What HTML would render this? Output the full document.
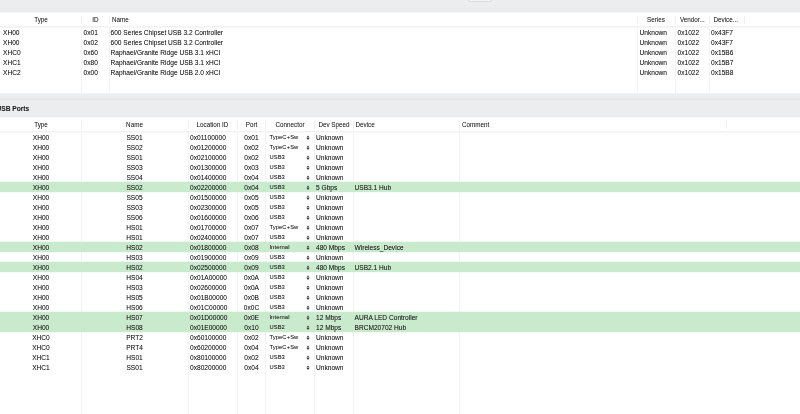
<!DOCTYPE html>
<html><head><meta charset="utf-8"><title>USB Ports</title>
<style>
html,body{margin:0;padding:0;}
body{width:800px;height:414px;overflow:hidden;background:#ecedef;font-family:"Liberation Sans",sans-serif;font-size:6.6px;color:#202020;text-shadow:0 0 0.45px rgba(0,0,0,0.3);position:relative;}
.w{position:absolute;left:0;width:800px;background:#fff;}
.t{position:absolute;white-space:nowrap;height:10px;line-height:10px;}
.h{position:absolute;white-space:nowrap;height:10px;line-height:10px;font-size:6.3px;color:#303030;}
.c{text-align:center;}
.v{position:absolute;width:1px;background:#f3f3f5;}
.hv{position:absolute;width:1px;background:#eeeef1;}
.hl{position:absolute;left:0;width:800px;height:1px;background:#f2f2f4;}
.g{position:absolute;left:0;width:800px;height:10px;background:#c9eacc;box-shadow:0 -1px 0 rgba(201,234,204,0.3),0 1px 0 rgba(201,234,204,0.2);}
.cn{font-size:5.8px;letter-spacing:0.1px;color:#222;}
.ar{position:absolute;width:4px;height:7px;}
#r{position:absolute;left:0;top:0;width:800px;height:414px;will-change:transform;}
</style></head><body><div id="r">

<div style="position:absolute;left:468px;top:-6.8px;width:22px;height:6.6px;border:1px solid #d9d9dc;border-radius:2.5px;background:#f4f4f5"></div>
<div class="w" style="top:12px;height:82px"></div>
<div style="position:absolute;left:0;top:12px;width:800px;height:1px;background:#f5f6f7"></div>
<div style="position:absolute;left:0;top:93px;width:800px;height:1px;background:#f1f2f3"></div>
<div class="hl" style="top:26px"></div><div class="hl" style="top:27px;background:#f8f8f9"></div>
<div class="hv" style="left:81px;top:16px;height:8px"></div>
<div class="hv" style="left:109px;top:16px;height:8px"></div>
<div class="hv" style="left:637px;top:16px;height:8px"></div>
<div class="hv" style="left:675px;top:16px;height:8px"></div>
<div class="hv" style="left:709px;top:16px;height:8px"></div>
<div class="hv" style="left:744px;top:16px;height:8px"></div>
<div class="v" style="left:81px;top:27px;height:67px"></div>
<div class="v" style="left:109px;top:27px;height:67px"></div>
<div class="v" style="left:637px;top:27px;height:67px"></div>
<div class="v" style="left:675px;top:27px;height:67px"></div>
<div class="v" style="left:709px;top:27px;height:67px"></div>
<div class="h c" style="left:0;width:82px;top:15.4px">Type</div>
<div class="h c" style="left:82px;width:27px;top:15.4px">ID</div>
<div class="h" style="left:112px;top:15.4px">Name</div>
<div class="h c" style="left:637.5px;width:37px;top:15.4px">Series</div>
<div class="h" style="left:680px;top:15.4px">Vendor...</div>
<div class="h" style="left:713.5px;top:15.4px">Device...</div>
<div class="t" style="left:3px;top:27.5px">XH00</div>
<div class="t" style="left:83.5px;top:27.5px">0x01</div>
<div class="t" style="left:110.5px;top:27.5px">600 Series Chipset USB 3.2 Controller</div>
<div class="t" style="left:639.5px;top:27.5px">Unknown</div>
<div class="t" style="left:677.5px;top:27.5px">0x1022</div>
<div class="t" style="left:711px;top:27.5px">0x43F7</div>
<div class="t" style="left:3px;top:37.5px">XH00</div>
<div class="t" style="left:83.5px;top:37.5px">0x02</div>
<div class="t" style="left:110.5px;top:37.5px">600 Series Chipset USB 3.2 Controller</div>
<div class="t" style="left:639.5px;top:37.5px">Unknown</div>
<div class="t" style="left:677.5px;top:37.5px">0x1022</div>
<div class="t" style="left:711px;top:37.5px">0x43F7</div>
<div class="t" style="left:3px;top:47.5px">XHC0</div>
<div class="t" style="left:83.5px;top:47.5px">0x60</div>
<div class="t" style="left:110.5px;top:47.5px">Raphael/Granite Ridge USB 3.1 xHCI</div>
<div class="t" style="left:639.5px;top:47.5px">Unknown</div>
<div class="t" style="left:677.5px;top:47.5px">0x1022</div>
<div class="t" style="left:711px;top:47.5px">0x15B6</div>
<div class="t" style="left:3px;top:57.5px">XHC1</div>
<div class="t" style="left:83.5px;top:57.5px">0x80</div>
<div class="t" style="left:110.5px;top:57.5px">Raphael/Granite Ridge USB 3.1 xHCI</div>
<div class="t" style="left:639.5px;top:57.5px">Unknown</div>
<div class="t" style="left:677.5px;top:57.5px">0x1022</div>
<div class="t" style="left:711px;top:57.5px">0x15B7</div>
<div class="t" style="left:3px;top:67.5px">XHC2</div>
<div class="t" style="left:83.5px;top:67.5px">0x00</div>
<div class="t" style="left:110.5px;top:67.5px">Raphael/Granite Ridge USB 2.0 xHCI</div>
<div class="t" style="left:639.5px;top:67.5px">Unknown</div>
<div class="t" style="left:677.5px;top:67.5px">0x1022</div>
<div class="t" style="left:711px;top:67.5px">0x15B8</div>
<div style="position:absolute;left:0;top:98px;width:800px;height:1px;background:#e8e9eb"></div>
<div style="position:absolute;left:0;top:99px;width:800px;height:1px;background:#e4e5e7"></div>
<div class="t" style="left:-3.6px;top:103.5px;font-weight:bold;font-size:6.65px;color:#262626">USB Ports</div>
<div class="w" style="top:117px;height:297px"></div>
<div style="position:absolute;left:0;top:117px;width:800px;height:1px;background:#fafafb"></div>
<div class="hl" style="top:131px"></div><div class="hl" style="top:132px;background:#f9f9fa"></div>
<div class="hv" style="left:81px;top:120.5px;height:8px"></div>
<div class="hv" style="left:188px;top:120.5px;height:8px"></div>
<div class="hv" style="left:237px;top:120.5px;height:8px"></div>
<div class="hv" style="left:265px;top:120.5px;height:8px"></div>
<div class="hv" style="left:314px;top:120.5px;height:8px"></div>
<div class="hv" style="left:353px;top:120.5px;height:8px"></div>
<div class="hv" style="left:459px;top:120.5px;height:8px"></div>
<div class="hv" style="left:726px;top:120.5px;height:8px"></div>
<div class="v" style="left:81px;top:132px;height:282px"></div>
<div class="v" style="left:188px;top:132px;height:282px"></div>
<div class="v" style="left:237px;top:132px;height:282px"></div>
<div class="v" style="left:265px;top:132px;height:282px"></div>
<div class="v" style="left:314px;top:132px;height:282px"></div>
<div class="v" style="left:353px;top:132px;height:282px"></div>
<div class="v" style="left:459px;top:132px;height:282px"></div>
<div class="g" style="top:182px"></div>
<div class="g" style="top:242px"></div>
<div class="g" style="top:262px"></div>
<div class="g" style="top:312px"></div>
<div class="g" style="top:322px"></div>
<div class="h c" style="left:0;width:82px;top:119.9px">Type</div>
<div class="h c" style="left:82px;width:105px;top:119.9px">Name</div>
<div class="h c" style="left:188px;width:49px;top:119.9px">Location ID</div>
<div class="h c" style="left:237.5px;width:28px;top:119.9px">Port</div>
<div class="h c" style="left:265.5px;width:49px;top:119.9px">Connector</div>
<div class="h c" style="left:315px;width:38px;top:119.9px">Dev Speed</div>
<div class="h" style="left:355.5px;top:119.9px">Device</div>
<div class="h" style="left:462px;top:119.9px">Comment</div>
<div class="t c" style="left:0;width:82px;top:132.5px">XH00</div>
<div class="t c" style="left:82px;width:105px;top:132.5px">SS01</div>
<div class="t" style="left:190px;top:132.5px">0x01100000</div>
<div class="t c" style="left:237.5px;width:28px;top:132.5px">0x01</div>
<div class="t cn" style="left:269.4px;top:132px">TypeC+Sw</div>
<svg class="ar" style="left:305.7px;top:134.55px;width:4px;height:6px" viewBox="0 0 4 6"><path d="M2 0.5L3.5 2.4L0.5 2.4ZM0.5 3.1L3.5 3.1L2 5Z" fill="#3a3a3a"/></svg>
<div class="t" style="left:316px;top:132.5px">Unknown</div>
<div class="t c" style="left:0;width:82px;top:142.5px">XH00</div>
<div class="t c" style="left:82px;width:105px;top:142.5px">SS02</div>
<div class="t" style="left:190px;top:142.5px">0x01200000</div>
<div class="t c" style="left:237.5px;width:28px;top:142.5px">0x02</div>
<div class="t cn" style="left:269.4px;top:142px">TypeC+Sw</div>
<svg class="ar" style="left:305.7px;top:144.55px;width:4px;height:6px" viewBox="0 0 4 6"><path d="M2 0.5L3.5 2.4L0.5 2.4ZM0.5 3.1L3.5 3.1L2 5Z" fill="#3a3a3a"/></svg>
<div class="t" style="left:316px;top:142.5px">Unknown</div>
<div class="t c" style="left:0;width:82px;top:152.5px">XH00</div>
<div class="t c" style="left:82px;width:105px;top:152.5px">SS01</div>
<div class="t" style="left:190px;top:152.5px">0x02100000</div>
<div class="t c" style="left:237.5px;width:28px;top:152.5px">0x02</div>
<div class="t cn" style="left:269.4px;top:152px">USB3</div>
<svg class="ar" style="left:305.7px;top:154.55px;width:4px;height:6px" viewBox="0 0 4 6"><path d="M2 0.5L3.5 2.4L0.5 2.4ZM0.5 3.1L3.5 3.1L2 5Z" fill="#3a3a3a"/></svg>
<div class="t" style="left:316px;top:152.5px">Unknown</div>
<div class="t c" style="left:0;width:82px;top:162.5px">XH00</div>
<div class="t c" style="left:82px;width:105px;top:162.5px">SS03</div>
<div class="t" style="left:190px;top:162.5px">0x01300000</div>
<div class="t c" style="left:237.5px;width:28px;top:162.5px">0x03</div>
<div class="t cn" style="left:269.4px;top:162px">USB3</div>
<svg class="ar" style="left:305.7px;top:164.55px;width:4px;height:6px" viewBox="0 0 4 6"><path d="M2 0.5L3.5 2.4L0.5 2.4ZM0.5 3.1L3.5 3.1L2 5Z" fill="#3a3a3a"/></svg>
<div class="t" style="left:316px;top:162.5px">Unknown</div>
<div class="t c" style="left:0;width:82px;top:172.5px">XH00</div>
<div class="t c" style="left:82px;width:105px;top:172.5px">SS04</div>
<div class="t" style="left:190px;top:172.5px">0x01400000</div>
<div class="t c" style="left:237.5px;width:28px;top:172.5px">0x04</div>
<div class="t cn" style="left:269.4px;top:172px">USB3</div>
<svg class="ar" style="left:305.7px;top:174.55px;width:4px;height:6px" viewBox="0 0 4 6"><path d="M2 0.5L3.5 2.4L0.5 2.4ZM0.5 3.1L3.5 3.1L2 5Z" fill="#3a3a3a"/></svg>
<div class="t" style="left:316px;top:172.5px">Unknown</div>
<div class="t c" style="left:0;width:82px;top:182.5px">XH00</div>
<div class="t c" style="left:82px;width:105px;top:182.5px">SS02</div>
<div class="t" style="left:190px;top:182.5px">0x02200000</div>
<div class="t c" style="left:237.5px;width:28px;top:182.5px">0x04</div>
<div class="t cn" style="left:269.4px;top:182px">USB3</div>
<svg class="ar" style="left:305.7px;top:184.55px;width:4px;height:6px" viewBox="0 0 4 6"><path d="M2 0.5L3.5 2.4L0.5 2.4ZM0.5 3.1L3.5 3.1L2 5Z" fill="#3a3a3a"/></svg>
<div class="t" style="left:316px;top:182.5px">5 Gbps</div>
<div class="t" style="left:354.5px;top:182.5px">USB3.1 Hub</div>
<div class="t c" style="left:0;width:82px;top:192.5px">XH00</div>
<div class="t c" style="left:82px;width:105px;top:192.5px">SS05</div>
<div class="t" style="left:190px;top:192.5px">0x01500000</div>
<div class="t c" style="left:237.5px;width:28px;top:192.5px">0x05</div>
<div class="t cn" style="left:269.4px;top:192px">USB3</div>
<svg class="ar" style="left:305.7px;top:194.55px;width:4px;height:6px" viewBox="0 0 4 6"><path d="M2 0.5L3.5 2.4L0.5 2.4ZM0.5 3.1L3.5 3.1L2 5Z" fill="#3a3a3a"/></svg>
<div class="t" style="left:316px;top:192.5px">Unknown</div>
<div class="t c" style="left:0;width:82px;top:202.5px">XH00</div>
<div class="t c" style="left:82px;width:105px;top:202.5px">SS03</div>
<div class="t" style="left:190px;top:202.5px">0x02300000</div>
<div class="t c" style="left:237.5px;width:28px;top:202.5px">0x05</div>
<div class="t cn" style="left:269.4px;top:202px">USB3</div>
<svg class="ar" style="left:305.7px;top:204.55px;width:4px;height:6px" viewBox="0 0 4 6"><path d="M2 0.5L3.5 2.4L0.5 2.4ZM0.5 3.1L3.5 3.1L2 5Z" fill="#3a3a3a"/></svg>
<div class="t" style="left:316px;top:202.5px">Unknown</div>
<div class="t c" style="left:0;width:82px;top:212.5px">XH00</div>
<div class="t c" style="left:82px;width:105px;top:212.5px">SS06</div>
<div class="t" style="left:190px;top:212.5px">0x01600000</div>
<div class="t c" style="left:237.5px;width:28px;top:212.5px">0x06</div>
<div class="t cn" style="left:269.4px;top:212px">USB3</div>
<svg class="ar" style="left:305.7px;top:214.55px;width:4px;height:6px" viewBox="0 0 4 6"><path d="M2 0.5L3.5 2.4L0.5 2.4ZM0.5 3.1L3.5 3.1L2 5Z" fill="#3a3a3a"/></svg>
<div class="t" style="left:316px;top:212.5px">Unknown</div>
<div class="t c" style="left:0;width:82px;top:222.5px">XH00</div>
<div class="t c" style="left:82px;width:105px;top:222.5px">HS01</div>
<div class="t" style="left:190px;top:222.5px">0x01700000</div>
<div class="t c" style="left:237.5px;width:28px;top:222.5px">0x07</div>
<div class="t cn" style="left:269.4px;top:222px">TypeC+Sw</div>
<svg class="ar" style="left:305.7px;top:224.55px;width:4px;height:6px" viewBox="0 0 4 6"><path d="M2 0.5L3.5 2.4L0.5 2.4ZM0.5 3.1L3.5 3.1L2 5Z" fill="#3a3a3a"/></svg>
<div class="t" style="left:316px;top:222.5px">Unknown</div>
<div class="t c" style="left:0;width:82px;top:232.5px">XH00</div>
<div class="t c" style="left:82px;width:105px;top:232.5px">HS01</div>
<div class="t" style="left:190px;top:232.5px">0x02400000</div>
<div class="t c" style="left:237.5px;width:28px;top:232.5px">0x07</div>
<div class="t cn" style="left:269.4px;top:232px">USB3</div>
<svg class="ar" style="left:305.7px;top:234.55px;width:4px;height:6px" viewBox="0 0 4 6"><path d="M2 0.5L3.5 2.4L0.5 2.4ZM0.5 3.1L3.5 3.1L2 5Z" fill="#3a3a3a"/></svg>
<div class="t" style="left:316px;top:232.5px">Unknown</div>
<div class="t c" style="left:0;width:82px;top:242.5px">XH00</div>
<div class="t c" style="left:82px;width:105px;top:242.5px">HS02</div>
<div class="t" style="left:190px;top:242.5px">0x01800000</div>
<div class="t c" style="left:237.5px;width:28px;top:242.5px">0x08</div>
<div class="t cn" style="left:269.4px;top:242px">Internal</div>
<svg class="ar" style="left:305.7px;top:244.55px;width:4px;height:6px" viewBox="0 0 4 6"><path d="M2 0.5L3.5 2.4L0.5 2.4ZM0.5 3.1L3.5 3.1L2 5Z" fill="#3a3a3a"/></svg>
<div class="t" style="left:316px;top:242.5px">480 Mbps</div>
<div class="t" style="left:354.5px;top:242.5px">Wireless_Device</div>
<div class="t c" style="left:0;width:82px;top:252.5px">XH00</div>
<div class="t c" style="left:82px;width:105px;top:252.5px">HS03</div>
<div class="t" style="left:190px;top:252.5px">0x01900000</div>
<div class="t c" style="left:237.5px;width:28px;top:252.5px">0x09</div>
<div class="t cn" style="left:269.4px;top:252px">USB3</div>
<svg class="ar" style="left:305.7px;top:254.55px;width:4px;height:6px" viewBox="0 0 4 6"><path d="M2 0.5L3.5 2.4L0.5 2.4ZM0.5 3.1L3.5 3.1L2 5Z" fill="#3a3a3a"/></svg>
<div class="t" style="left:316px;top:252.5px">Unknown</div>
<div class="t c" style="left:0;width:82px;top:262.5px">XH00</div>
<div class="t c" style="left:82px;width:105px;top:262.5px">HS02</div>
<div class="t" style="left:190px;top:262.5px">0x02500000</div>
<div class="t c" style="left:237.5px;width:28px;top:262.5px">0x09</div>
<div class="t cn" style="left:269.4px;top:262px">USB3</div>
<svg class="ar" style="left:305.7px;top:264.55px;width:4px;height:6px" viewBox="0 0 4 6"><path d="M2 0.5L3.5 2.4L0.5 2.4ZM0.5 3.1L3.5 3.1L2 5Z" fill="#3a3a3a"/></svg>
<div class="t" style="left:316px;top:262.5px">480 Mbps</div>
<div class="t" style="left:354.5px;top:262.5px">USB2.1 Hub</div>
<div class="t c" style="left:0;width:82px;top:272.5px">XH00</div>
<div class="t c" style="left:82px;width:105px;top:272.5px">HS04</div>
<div class="t" style="left:190px;top:272.5px">0x01A00000</div>
<div class="t c" style="left:237.5px;width:28px;top:272.5px">0x0A</div>
<div class="t cn" style="left:269.4px;top:272px">USB3</div>
<svg class="ar" style="left:305.7px;top:274.55px;width:4px;height:6px" viewBox="0 0 4 6"><path d="M2 0.5L3.5 2.4L0.5 2.4ZM0.5 3.1L3.5 3.1L2 5Z" fill="#3a3a3a"/></svg>
<div class="t" style="left:316px;top:272.5px">Unknown</div>
<div class="t c" style="left:0;width:82px;top:282.5px">XH00</div>
<div class="t c" style="left:82px;width:105px;top:282.5px">HS03</div>
<div class="t" style="left:190px;top:282.5px">0x02600000</div>
<div class="t c" style="left:237.5px;width:28px;top:282.5px">0x0A</div>
<div class="t cn" style="left:269.4px;top:282px">USB3</div>
<svg class="ar" style="left:305.7px;top:284.55px;width:4px;height:6px" viewBox="0 0 4 6"><path d="M2 0.5L3.5 2.4L0.5 2.4ZM0.5 3.1L3.5 3.1L2 5Z" fill="#3a3a3a"/></svg>
<div class="t" style="left:316px;top:282.5px">Unknown</div>
<div class="t c" style="left:0;width:82px;top:292.5px">XH00</div>
<div class="t c" style="left:82px;width:105px;top:292.5px">HS05</div>
<div class="t" style="left:190px;top:292.5px">0x01B00000</div>
<div class="t c" style="left:237.5px;width:28px;top:292.5px">0x0B</div>
<div class="t cn" style="left:269.4px;top:292px">USB3</div>
<svg class="ar" style="left:305.7px;top:294.55px;width:4px;height:6px" viewBox="0 0 4 6"><path d="M2 0.5L3.5 2.4L0.5 2.4ZM0.5 3.1L3.5 3.1L2 5Z" fill="#3a3a3a"/></svg>
<div class="t" style="left:316px;top:292.5px">Unknown</div>
<div class="t c" style="left:0;width:82px;top:302.5px">XH00</div>
<div class="t c" style="left:82px;width:105px;top:302.5px">HS06</div>
<div class="t" style="left:190px;top:302.5px">0x01C00000</div>
<div class="t c" style="left:237.5px;width:28px;top:302.5px">0x0C</div>
<div class="t cn" style="left:269.4px;top:302px">USB3</div>
<svg class="ar" style="left:305.7px;top:304.55px;width:4px;height:6px" viewBox="0 0 4 6"><path d="M2 0.5L3.5 2.4L0.5 2.4ZM0.5 3.1L3.5 3.1L2 5Z" fill="#3a3a3a"/></svg>
<div class="t" style="left:316px;top:302.5px">Unknown</div>
<div class="t c" style="left:0;width:82px;top:312.5px">XH00</div>
<div class="t c" style="left:82px;width:105px;top:312.5px">HS07</div>
<div class="t" style="left:190px;top:312.5px">0x01D00000</div>
<div class="t c" style="left:237.5px;width:28px;top:312.5px">0x0E</div>
<div class="t cn" style="left:269.4px;top:312px">Internal</div>
<svg class="ar" style="left:305.7px;top:314.55px;width:4px;height:6px" viewBox="0 0 4 6"><path d="M2 0.5L3.5 2.4L0.5 2.4ZM0.5 3.1L3.5 3.1L2 5Z" fill="#3a3a3a"/></svg>
<div class="t" style="left:316px;top:312.5px">12 Mbps</div>
<div class="t" style="left:354.5px;top:312.5px">AURA LED Controller</div>
<div class="t c" style="left:0;width:82px;top:322.5px">XH00</div>
<div class="t c" style="left:82px;width:105px;top:322.5px">HS08</div>
<div class="t" style="left:190px;top:322.5px">0x01E00000</div>
<div class="t c" style="left:237.5px;width:28px;top:322.5px">0x10</div>
<div class="t cn" style="left:269.4px;top:322px">USB2</div>
<svg class="ar" style="left:305.7px;top:324.55px;width:4px;height:6px" viewBox="0 0 4 6"><path d="M2 0.5L3.5 2.4L0.5 2.4ZM0.5 3.1L3.5 3.1L2 5Z" fill="#3a3a3a"/></svg>
<div class="t" style="left:316px;top:322.5px">12 Mbps</div>
<div class="t" style="left:354.5px;top:322.5px">BRCM20702 Hub</div>
<div class="t c" style="left:0;width:82px;top:332.5px">XHC0</div>
<div class="t c" style="left:82px;width:105px;top:332.5px">PRT2</div>
<div class="t" style="left:190px;top:332.5px">0x60100000</div>
<div class="t c" style="left:237.5px;width:28px;top:332.5px">0x02</div>
<div class="t cn" style="left:269.4px;top:332px">TypeC+Sw</div>
<svg class="ar" style="left:305.7px;top:334.55px;width:4px;height:6px" viewBox="0 0 4 6"><path d="M2 0.5L3.5 2.4L0.5 2.4ZM0.5 3.1L3.5 3.1L2 5Z" fill="#3a3a3a"/></svg>
<div class="t" style="left:316px;top:332.5px">Unknown</div>
<div class="t c" style="left:0;width:82px;top:342.5px">XHC0</div>
<div class="t c" style="left:82px;width:105px;top:342.5px">PRT4</div>
<div class="t" style="left:190px;top:342.5px">0x60200000</div>
<div class="t c" style="left:237.5px;width:28px;top:342.5px">0x04</div>
<div class="t cn" style="left:269.4px;top:342px">TypeC+Sw</div>
<svg class="ar" style="left:305.7px;top:344.55px;width:4px;height:6px" viewBox="0 0 4 6"><path d="M2 0.5L3.5 2.4L0.5 2.4ZM0.5 3.1L3.5 3.1L2 5Z" fill="#3a3a3a"/></svg>
<div class="t" style="left:316px;top:342.5px">Unknown</div>
<div class="t c" style="left:0;width:82px;top:352.5px">XHC1</div>
<div class="t c" style="left:82px;width:105px;top:352.5px">HS01</div>
<div class="t" style="left:190px;top:352.5px">0x80100000</div>
<div class="t c" style="left:237.5px;width:28px;top:352.5px">0x02</div>
<div class="t cn" style="left:269.4px;top:352px">USB3</div>
<svg class="ar" style="left:305.7px;top:354.55px;width:4px;height:6px" viewBox="0 0 4 6"><path d="M2 0.5L3.5 2.4L0.5 2.4ZM0.5 3.1L3.5 3.1L2 5Z" fill="#3a3a3a"/></svg>
<div class="t" style="left:316px;top:352.5px">Unknown</div>
<div class="t c" style="left:0;width:82px;top:362.5px">XHC1</div>
<div class="t c" style="left:82px;width:105px;top:362.5px">SS01</div>
<div class="t" style="left:190px;top:362.5px">0x80200000</div>
<div class="t c" style="left:237.5px;width:28px;top:362.5px">0x04</div>
<div class="t cn" style="left:269.4px;top:362px">USB3</div>
<svg class="ar" style="left:305.7px;top:364.55px;width:4px;height:6px" viewBox="0 0 4 6"><path d="M2 0.5L3.5 2.4L0.5 2.4ZM0.5 3.1L3.5 3.1L2 5Z" fill="#3a3a3a"/></svg>
<div class="t" style="left:316px;top:362.5px">Unknown</div>
</div></body></html>
